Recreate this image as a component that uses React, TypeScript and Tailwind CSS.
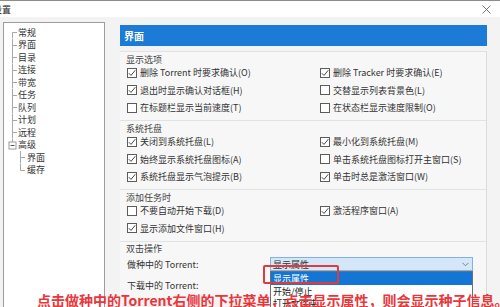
import React from "react";

const FONT = "font-['Noto_Sans_CJK_SC','Noto_Sans',sans-serif]";

function Check({ on }: { on: boolean }) {
  return (
    <span className="flex h-[10px] w-[10px] shrink-0 items-center justify-center border border-[#5c5c5c] bg-white">
      {on && (
        <svg width="8" height="8" viewBox="0 0 8 8">
          <polyline points="0.8,4.2 3,6.4 7.3,1.2" fill="none" stroke="#333" strokeWidth="0.9" />
        </svg>
      )}
    </span>
  );
}

function Item({ on, label }: { on: boolean; label: string }) {
  return (
    <div className="flex h-[17.5px] items-center gap-[3px] text-[9px] text-[#333]">
      <Check on={on} />
      <span className="whitespace-nowrap leading-none">{label}</span>
    </div>
  );
}

function Group({ title, rows, last }: { title: string; rows: [boolean, string, boolean | null, string | null][]; last?: boolean }) {
  return (
    <div className={`border-t border-[#e2e2e2] pt-[2px] ${last ? "" : "pb-[3.5px]"}`}>
      <div className="flex h-[10px] items-center pl-[6px] text-[9px] leading-none text-[#444]">{title}</div>
      {rows.map((r, i) => (
        <div key={i} className="flex pl-[7px]">
          <div className="w-[193px]">
            <Item on={r[0]} label={r[1]} />
          </div>
          {r[2] !== null && r[3] !== null && <Item on={r[2] as boolean} label={r[3] as string} />}
        </div>
      ))}
    </div>
  );
}

type TreeRow = { label: string; kind: "first" | "mid" | "expander" | "child" | "childLast" };

function Connector({ kind }: { kind: TreeRow["kind"] }) {
  const c = "#a8a8a8";
  if (kind === "child" || kind === "childLast") {
    return (
      <svg width="22" height="12.5" className="shrink-0">
        <line x1="16.5" y1="0" x2="16.5" y2={kind === "child" ? 12.5 : 6.25} stroke={c} strokeWidth="1" />
        <line x1="16.5" y1="6.5" x2="21" y2="6.5" stroke={c} strokeWidth="1" />
      </svg>
    );
  }
  if (kind === "expander") {
    return (
      <svg width="13" height="12.5" className="shrink-0">
        <line x1="8.5" y1="0" x2="8.5" y2="3" stroke={c} strokeWidth="1" />
        <rect x="5" y="3" width="7" height="7" fill="white" stroke="#9a9a9a" strokeWidth="1" />
        <line x1="6.5" y1="6.5" x2="10.5" y2="6.5" stroke="#555" strokeWidth="1" />
      </svg>
    );
  }
  return (
    <svg width="13" height="12.5" className="shrink-0">
      <line x1="8.5" y1={kind === "first" ? 6.25 : 0} x2="8.5" y2="12.5" stroke={c} strokeWidth="1" />
      <line x1="8.5" y1="6.5" x2="13" y2="6.5" stroke={c} strokeWidth="1" />
    </svg>
  );
}

const tree: TreeRow[] = [
  { label: "常规", kind: "first" },
  { label: "界面", kind: "mid" },
  { label: "目录", kind: "mid" },
  { label: "连接", kind: "mid" },
  { label: "带宽", kind: "mid" },
  { label: "任务", kind: "mid" },
  { label: "队列", kind: "mid" },
  { label: "计划", kind: "mid" },
  { label: "远程", kind: "mid" },
  { label: "高级", kind: "expander" },
  { label: "界面", kind: "child" },
  { label: "缓存", kind: "childLast" },
];

export default function App() {
  return (
    <div className={`relative h-[307px] w-[500px] overflow-hidden border-t border-[#8c8c8c] bg-white ${FONT}`}>
      <div className="flex h-[16px] items-center justify-between">
        <span className="ml-[-7px] text-[9px] leading-none text-[#222]">设置</span>
        <svg width="9" height="9" viewBox="0 0 9 9" className="mr-[9px]">
          <path d="M0.5 0.5 L8.5 8.5 M8.5 0.5 L0.5 8.5" stroke="#666" strokeWidth="0.9" />
        </svg>
      </div>
      <div className="flex h-[290px] bg-[#f3f3f3]">
        <div className="ml-[3px] mt-[5px] h-[290px] w-[102px] shrink-0 border border-[#9c9c9c] bg-white pt-[3px]">
          {tree.map((t, i) => (
            <div key={i} className="flex h-[12.5px] items-center">
              <Connector kind={t.kind} />
              <span className="ml-[1px] whitespace-nowrap text-[9px] leading-none text-[#333]">{t.label}</span>
            </div>
          ))}
        </div>
        <div className="ml-[15px] mt-[8px] w-[367px] shrink-0">
          <div className="flex h-[21px] items-center bg-[#1c7bd6] pl-[4px] text-[10px] font-bold leading-none text-white">界面</div>
          <div className="mt-[5px] border-r border-[#dcdcdc] bg-[#f7f7f7]">
            <Group
              title="显示选项"
              rows={[
                [true, "删除 Torrent 时要求确认(O)", true, "删除 Tracker 时要求确认(E)"],
                [true, "退出时显示确认对话框(H)", false, "交替显示列表背景色(L)"],
                [false, "在标题栏显示当前速度(T)", false, "在状态栏显示速度限制(O)"],
              ]}
            />
            <Group
              title="系统托盘"
              rows={[
                [true, "关闭到系统托盘(L)", true, "最小化到系统托盘(M)"],
                [true, "始终显示系统托盘图标(A)", false, "单击系统托盘图标打开主窗口(S)"],
                [true, "系统托盘显示气泡提示(B)", true, "单击时总是激活窗口(W)"],
              ]}
            />
            <Group
              title="添加任务时"
              rows={[
                [false, "不要自动开始下载(D)", true, "激活程序窗口(A)"],
                [true, "显示添加文件窗口(H)", null, null],
              ]}
            />
            <div className="border-t border-[#e2e2e2] pt-[2px]">
              <div className="flex h-[10px] items-center pl-[6px] text-[9px] leading-none text-[#444]">双击操作</div>
              <div className="flex h-[21px] items-center pl-[7px]">
                <span className="w-[143px] whitespace-nowrap text-[9px] leading-none text-[#333]">做种中的 Torrent:</span>
                <div className="relative">
                  <div className="flex h-[14px] w-[203px] items-center justify-between border border-[#7db3e8] bg-[#d3e7f8] pl-[2px] pr-[3px]">
                    <span className="text-[9px] leading-none text-[#333]">显示属性</span>
                    <svg width="7" height="5" viewBox="0 0 7 5">
                      <polyline points="0.5,0.8 3.5,3.8 6.5,0.8" fill="none" stroke="#777" strokeWidth="0.9" />
                    </svg>
                  </div>
                  <div className="absolute left-0 top-full z-10 w-[203px] border border-[#6f6f6f] bg-white">
                    <div className="flex h-[13px] items-center bg-[#1476d4] pl-[2px] text-[9px] leading-none text-white">显示属性</div>
                    <div className="flex h-[12px] items-center pl-[2px] text-[9px] leading-none text-[#222]">开始/停止</div>
                    <div className="flex h-[12px] items-center pl-[2px] text-[9px] leading-none text-[#222]">打开文件夹</div>
                  </div>
                </div>
              </div>
              <div className="flex h-[22px] items-center pl-[7px]">
                <span className="whitespace-nowrap text-[9px] leading-none text-[#333]">下载中的 Torrent:</span>
              </div>
            </div>
          </div>
        </div>
      </div>
      <div className="absolute left-[263px] top-[264px] z-20 h-[19px] w-[76px] rounded-[2px] border-2 border-[#df3b3f]" />
      <div className="absolute left-[37px] top-[292px] z-30 whitespace-nowrap text-[14px] font-bold leading-none text-[#e8373c]">
        点击做种中的Torrent右侧的下拉菜单，点击显示属性，则会显示种子信息。
      </div>
    </div>
  );
}
